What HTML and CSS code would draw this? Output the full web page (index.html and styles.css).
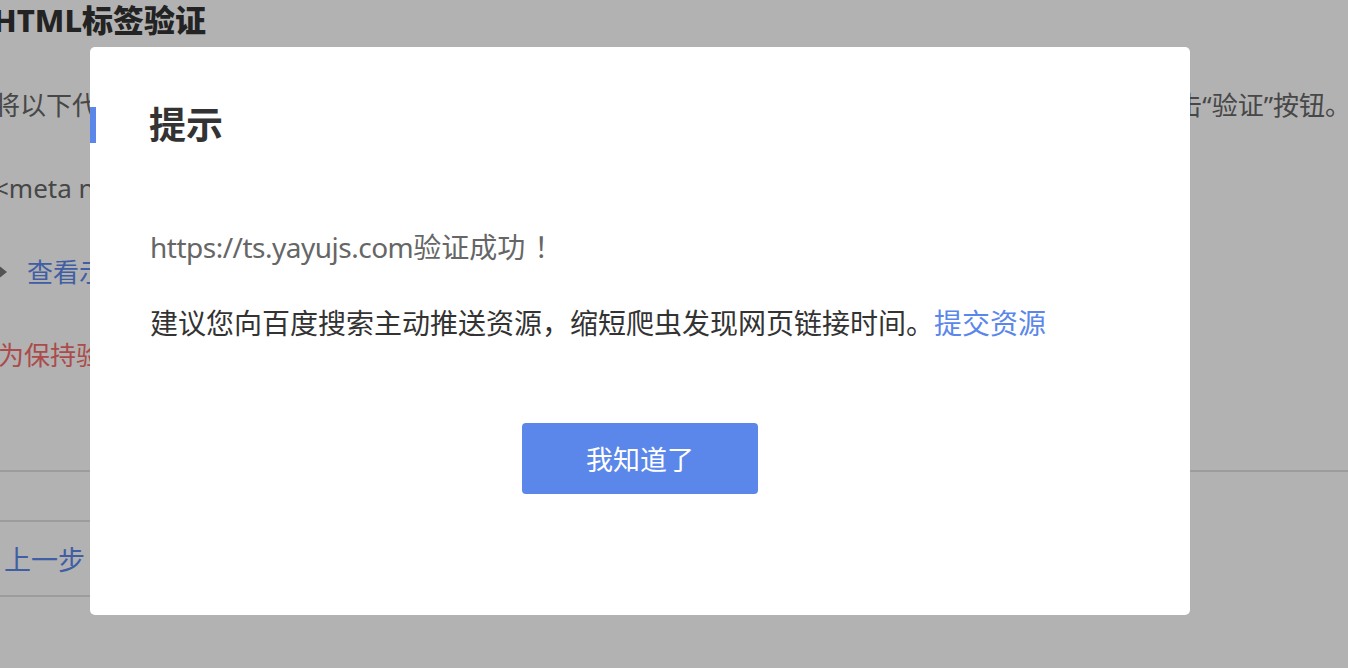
FILE: index.html
```html
<!DOCTYPE html>
<html lang="zh-CN">

<head>
    <meta charset="UTF-8">
    <meta name="viewport" content="width=device-width, initial-scale=1.0">
    <title>HTML标签验证</title>
    <link rel="stylesheet" href="styles.css">
</head>

<body>
    <div class="page">
        <h2 class="page-title">HTML标签验证</h2>
        <p class="step-tip">
            <span>将以下代码添加到您网站首页HTML代码的&lt;head&gt;标签与&lt;/head&gt;标签之间，完成后</span>
            <span>点击“验证”按钮。</span>
        </p>
        <p class="code-line">&lt;meta name="baidu-site-verification" content="code-xxxxxxxx" /&gt;</p>
        <p class="example"><i class="caret"></i><a href="#">查看示例</a></p>
        <p class="warn">为保持验证通过的状态，成功验证后请不要删除该标签</p>
        <div class="actions">
            <button class="prev-btn">上一步</button>
        </div>
    </div>

    <div class="mask"></div>

    <div class="dialog">
        <h3 class="dialog-title">提示</h3>
        <div class="dialog-body">
            <p class="result"><span class="url">https://ts.yayujs.com</span>验证成功<span class="bang">！</span></p>
            <p class="advice">建议您向百度搜索主动推送资源，缩短爬虫发现网页链接时间。<a href="#">提交资源</a></p>
        </div>
        <div class="dialog-foot">
            <button class="ok-btn">我知道了</button>
        </div>
    </div>
</body>

</html>
```

FILE: styles.css
```css
body {
    margin: 0;
    background-color: #fff;
    font-family: "Noto Sans", "Noto Sans CJK SC", sans-serif;
    overflow: hidden;
}

a {
    text-decoration: none;
}

/* 底层页面 */
.page {
    margin-left: -12px;
    margin-right: -3px;
}

.page-title {
    margin: 0 0 0 5px;
    font-size: 31px;
    line-height: 40px;
    font-weight: 800;
    color: #333;
}

.page p {
    margin: 0;
    font-size: 26px;
    line-height: 40px;
    color: #666;
}

.page .step-tip {
    display: flex;
    justify-content: space-between;
    white-space: nowrap;
    margin-top: 45px;
    padding-left: 6px;
}

.page .code-line {
    margin-top: 43px;
    padding-left: 6px;
    white-space: nowrap;
}

.page .example {
    display: flex;
    align-items: center;
    margin-top: 44px;
    padding-left: 5px;
}

.caret {
    width: 0;
    height: 0;
    border-top: 11px solid transparent;
    border-bottom: 11px solid transparent;
    border-left: 14px solid #777;
    margin-right: 20px;
}

.example a {
    color: #5b87eb;
}

.page .warn {
    margin-top: 43px;
    padding-left: 10px;
    color: #f56c6c;
    white-space: nowrap;
}

.actions {
    margin-top: 95px;
    border-top: 2px solid #e0e0e0;
    padding-top: 48px;
}

.prev-btn {
    height: 77px;
    padding: 0 40px 0 14px;
    border: 2px solid #e0e0e0;
    background: #fff;
    font-family: inherit;
    font-size: 27px;
    color: #5b87eb;
}

/* 遮罩和弹窗 */
.mask {
    position: fixed;
    inset: 0;
    background-color: rgba(0, 0, 0, .3);
}

.dialog {
    position: fixed;
    left: 90px;
    top: 47px;
    width: 1100px;
    box-sizing: border-box;
    padding: 60px 60px 121px;
    background-color: #fff;
    border-radius: 5px;
}

.dialog-title {
    margin: 0 0 0 -60px;
    padding-left: 53px;
    border-left: 6px solid #5b87eb;
    font-size: 37px;
    line-height: 36px;
    font-weight: 700;
    color: #333;
}

.dialog-body {
    margin-top: 83px;
}

.dialog-body p {
    margin: 0;
    height: 40px;
    font-size: 28px;
    line-height: 40px;
}

.dialog-body .result {
    color: #666;
}

.result .url {
    letter-spacing: -0.5px;
}

.result .bang {
    margin-left: 9px;
    font-family: "Noto Sans CJK SC", sans-serif;
}

.dialog-body .advice {
    margin-top: 37px;
    color: #333;
}

.advice a {
    color: #5b87eb;
}

.dialog-foot {
    display: flex;
    justify-content: center;
    margin-top: 80px;
}

.ok-btn {
    width: 236px;
    height: 71px;
    border: none;
    border-radius: 4px;
    background-color: #5b87eb;
    color: #fff;
    font-family: inherit;
    font-size: 27px;
}
```
